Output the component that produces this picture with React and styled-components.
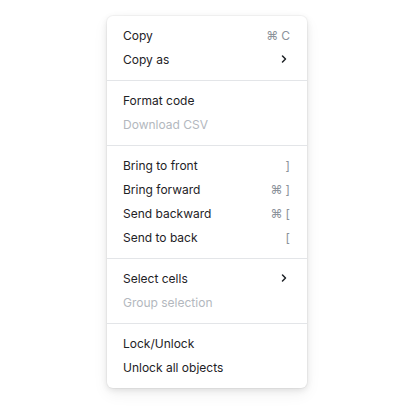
import styled, { createGlobalStyle } from "styled-components"
import { ChevronRight } from "lucide-react"

const GlobalStyle = createGlobalStyle`
    body {
        margin: 0;
        background: #ffffff;
        font-family: Inter, "Noto Sans", "DejaVu Sans", sans-serif;
    }
`;

const Page = styled.div`
    display: flex;
    align-items: flex-start;
    padding: 16px 0 0 107px;
    height: 408px;
    box-sizing: border-box;
`;

const Menu = styled.div`
    width: 200px;
    box-sizing: border-box;
    padding: 8px 0;
    background: #ffffff;
    border-radius: 6px;
    box-shadow: 0 0 0 1px rgba(0, 0, 0, 0.03), 0 2px 6px rgba(0, 0, 0, 0.1), 0 6px 16px rgba(0, 0, 0, 0.06);
    display: flex;
    flex-direction: column;
`;

const Item = styled.div`
    height: 24px;
    box-sizing: border-box;
    padding: 0 17px 2px 16px;
    display: flex;
    align-items: center;
    justify-content: space-between;
    font-size: 12px;
    color: ${p => (p.disabled ? "#b3b8be" : "#1e2226")};
    cursor: ${p => (p.disabled ? "default" : "pointer")};
`;

const Shortcut = styled.span`
    display: flex;
    align-items: center;
    gap: 3px;
    font-size: 12px;
    color: #8b929a;
`;

const Separator = styled.div`
    height: 1px;
    margin: 8px 0;
    background: #e3e5e8;
`;

const groups = [
    [
        { label: "Copy", keys: ["⌘", "C"] },
        { label: "Copy as", sub: true },
    ],
    [
        { label: "Format code" },
        { label: "Download CSV", disabled: true },
    ],
    [
        { label: "Bring to front", keys: ["]"] },
        { label: "Bring forward", keys: ["⌘", "]"] },
        { label: "Send backward", keys: ["⌘", "["] },
        { label: "Send to back", keys: ["["] },
    ],
    [
        { label: "Select cells", sub: true },
        { label: "Group selection", disabled: true },
    ],
    [
        { label: "Lock/Unlock" },
        { label: "Unlock all objects" },
    ],
];

const App = () => {
  return (
    <Page>
        <GlobalStyle />
        <Menu>
            {groups.map((group, gi) => (
                <div key={gi}>
                    {gi > 0 && <Separator />}
                    {group.map(item => (
                        <Item key={item.label} disabled={item.disabled}>
                            <span>{item.label}</span>
                            {item.keys && (
                                <Shortcut>
                                    {item.keys.map(k => <span key={k}>{k}</span>)}
                                </Shortcut>
                            )}
                            {item.sub && <ChevronRight size={12} strokeWidth={3} color="#1e2226" />}
                        </Item>
                    ))}
                </div>
            ))}
        </Menu>
    </Page>
  )
}

export default App
